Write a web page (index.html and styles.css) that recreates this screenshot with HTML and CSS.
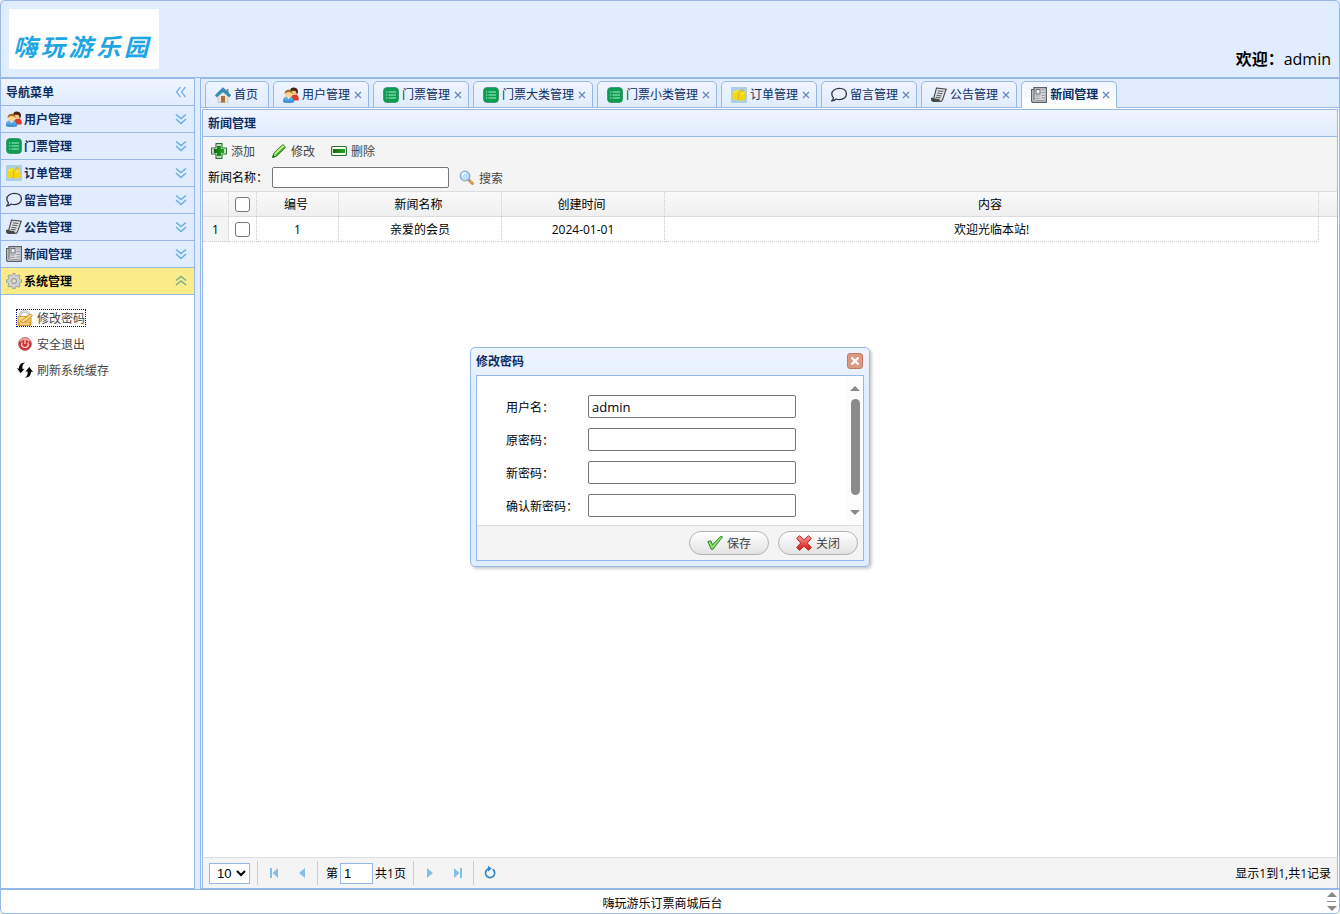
FILE: index.html
```html
<!DOCTYPE html>
<html lang="zh-CN">
<head>
<meta charset="utf-8">
<title>嗨玩游乐订票商城后台</title>
<link rel="stylesheet" href="styles.css">
</head>
<body>
<svg class="sprite" aria-hidden="true">
  <defs>
    <linearGradient id="g-gold" x1="0" y1="0" x2="0" y2="1"><stop offset="0" stop-color="#fbe08a"/><stop offset="1" stop-color="#e6a021"/></linearGradient>
    <linearGradient id="g-red" x1="0" y1="0" x2="0" y2="1"><stop offset="0" stop-color="#f6a3a0"/><stop offset="0.45" stop-color="#e85a55"/><stop offset="1" stop-color="#d01818"/></linearGradient>
    <linearGradient id="g-blue" x1="0" y1="0" x2="0" y2="1"><stop offset="0" stop-color="#7cc4f2"/><stop offset="1" stop-color="#2f86d2"/></linearGradient>
    <linearGradient id="g-green" x1="0" y1="0" x2="1" y2="0"><stop offset="0" stop-color="#0c6b0c"/><stop offset="1" stop-color="#2aa52a"/></linearGradient>
  </defs>
  <symbol id="i-home" viewBox="0 0 16 16">
    <path d="M3 8v7.500h10V8L8 3z" fill="#e9e4dc" stroke="#b9b2a6" stroke-width=".6"/>
    <path d="M6 9h4v6.500H6z" fill="#b0703a"/>
    <path d="M11.500 2h2v4h-2z" fill="#7b8d99"/>
    <path d="M8 .600L.200 8.300l1.500 1.700L8 4.700l6.300 5.300 1.500-1.700z" fill="#2f8fb5" stroke="#1e6c8c" stroke-width=".5"/>
  </symbol>
  <symbol id="i-users" viewBox="0 0 16 16">
    <path d="M8 13c0-4 1-5.500 4-5.500s3.800 2 3.800 5.500c-1 .800-6 .800-7.800 0z" fill="#e23a20"/>
    <circle cx="11" cy="5" r="3" fill="#f6c38b"/>
    <path d="M7 4.500C7 1.500 8.600.3 11 .4c2.800.1 4.200 2 4 4.600-.2 1.500-.8 2.200-1.500 2.200.2-2-.5-3.200-2.200-3.400-1.500-.2-2.500.5-4.300.7z" fill="#4b2412"/>
    <path d="M.3 15c0-4 1.500-5.500 5.100-5.500s5.400 1.500 5.400 5.500c-1.500.9-8.600.9-10.500 0z" fill="url(#g-blue)" stroke="#2a78bd" stroke-width=".5"/>
    <path d="M4 9.800l1.700 2.200L7.300 9.800z" fill="#fff"/>
    <circle cx="5.500" cy="7.200" r="3.200" fill="#ffd28c"/>
    <path d="M1.600 7.300C1.500 4.300 3 2.800 5.600 2.800s4.100 1.500 3.800 4.300C8.700 6 7.500 5.100 6 5.100s-3.200.9-4.400 2.200z" fill="#a8691c"/>
  </symbol>
  <symbol id="i-ticket" viewBox="0 0 16 16">
    <rect x=".5" y=".5" width="15" height="15" rx="3.500" fill="#0b9d52" stroke="#30875c" stroke-width=".7"/>
    <path d="M5.500 5H13M5.500 8H13M5.500 11H13" stroke="#a9efc6"/>
    <path d="M3 5h1.300M3 8h1.300M3 11h1.300" stroke="#a9efc6"/>
  </symbol>
  <symbol id="i-order" viewBox="0 0 16 16">
    <rect width="16" height="16" rx="1" fill="#accfe8"/>
    <path d="M1.500 5l5-2.500L8.500 4v8.500L3.500 13l-2-1z" fill="#f3d813"/>
    <path d="M7.500 5.500L13.500 3.500l1.500 8.500-5.500 2-2.500-1z" fill="#f5d50c"/>
    <path d="M8 5.500l-1 7M9.500 5l.5-2 2-.5.500 1.500" fill="none" stroke="#d9a90a" stroke-width=".8"/>
    <path d="M3 5.500l3-1.200M9.500 7l3.500-1" stroke="#fff17a"/>
  </symbol>
  <symbol id="i-msg" viewBox="0 0 16 16">
    <path d="M8.500 1.300c4 0 6.900 2.300 6.900 5.600s-3 5.700-6.900 5.700c-1.200 0-2.300-.2-3.300-.6C4 13.300 2.500 13.800.7 13.800c1.200-.8 1.700-1.800 1.700-3C1.300 9.800.8 8.400.8 7c0-3.300 3.400-5.700 7.700-5.700z" fill="none" stroke="#2f343f" stroke-width="1.300"/>
  </symbol>
  <symbol id="i-notice" viewBox="0 0 16 16">
    <path d="M5.500 1l9.700 1.300c-1.500 3-2.500 8.500-4.500 12L1 13.800l-.5-2.300 2.300-.5z" fill="#e2e2e2" stroke="#44464a" stroke-width="1.100"/>
    <path d="M.4 10.800l8 1.500c.2 1.500 1 2.200 2 2.400L2.500 15C1 14.600 0 12.600.4 10.800z" fill="#44464a"/>
    <path d="M7 3.700l5.300.8M6.300 6l5.200.8M5.500 8.300l5 .7M4.800 10.300l4.700.6" stroke="#55585c" stroke-width="1.100"/>
  </symbol>
  <symbol id="i-news" viewBox="0 0 16 16">
    <path d="M3 .600h12.400v14.800h-13c-1.200 0-1.800-.6-1.800-1.600V2.500H3z" fill="#d2d4d7" stroke="#5c5f64" stroke-width="1.200"/>
    <path d="M3 2.500v11" stroke="#5c5f64"/>
    <rect x="5" y="2.500" width="4" height="4.500" fill="#eee" stroke="#6d7076"/>
    <path d="M10.500 3h3.500M10.500 5.500h3.500M4.500 9h4M10.500 8.500h3.500M4.500 11.500h4M10.500 11h3.500M4.500 13.500h9.500" stroke="#9b9da2" stroke-width="1.200"/>
  </symbol>
  <symbol id="i-gear" viewBox="0 0 16 16">
    <path d="M8 0v16M0 8h16M2.300 2.300l11.400 11.400M13.700 2.300L2.300 13.700" stroke="#96989b" stroke-width="3"/>
    <circle cx="8" cy="8" r="4.300" fill="none" stroke="#96989b" stroke-width="4.600"/>
    <path d="M8 .800V4M8 12v3.200M.800 8H4M12 8h3.200M2.900 2.900L5 5M11 11l2.100 2.100M13.100 2.900L11 5M5 11l-2.100 2.100" stroke="#cfd1d3" stroke-width="1.600"/>
    <circle cx="8" cy="8" r="4.400" fill="none" stroke="#cfd1d3" stroke-width="3"/>
    <circle cx="8" cy="8" r="2.300" fill="#e9e3c0" stroke="#96989b" stroke-width=".8"/>
  </symbol>
  <symbol id="i-lock" viewBox="0 0 16 16">
    <path d="M3 7.500V5.500c0-5.500 9-5.500 9 0v2" fill="none" stroke="#9da0a3" stroke-width="2.400"/>
    <path d="M3 7.500V5.500c0-5.500 9-5.500 9 0v2" fill="none" stroke="#e4e5e6" stroke-width="1.200"/>
    <rect x="1" y="6.500" width="13" height="9" rx="1" fill="url(#g-gold)" stroke="#bd8120" stroke-width=".8"/>
    <path d="M5 12.500l1-3 7-5.500 2.500 1.500-7 6z" fill="#fbd878" stroke="#b76f13" stroke-width=".7"/>
    <path d="M5 12.500l1-2.500 1.700 1.700z" fill="#fff4d5"/>
    <path d="M3 14h9" stroke="#fff3c0"/>
  </symbol>
  <symbol id="i-power" viewBox="0 0 16 16">
    <circle cx="8" cy="8" r="6.400" fill="#cf3434" stroke="#b25553" stroke-width=".8"/>
    <path d="M3.500 5.500C5 2 11 2 12.500 5.500" fill="none" stroke="#f2aaa6" stroke-width="1.600"/>
    <path d="M5.200 6.500c-1.700 3 .6 5 2.800 5s4.500-2 2.800-5M8 4v4" fill="none" stroke="#fbe3e2" stroke-width="1.200"/>
  </symbol>
  <symbol id="i-refresh" viewBox="0 0 16 16">
    <path d="M8 .500C4 .800 1.800 3 2 6.500L0 6.300l3.700 5L7.500 6.800l-2 .100C5 4.500 5.800 2 8 .500z" fill="#080808"/>
    <path d="M8 15.800c4-.300 6.200-2.500 6-6l2 .200-3.700-5L8.500 9.500l2-.100c.500 2.400-.300 4.900-2.500 6.400z" fill="#080808"/>
  </symbol>
  <symbol id="i-add" viewBox="0 0 16 16">
    <path d="M5 .600h6V5h4.400v6H11v4.400H5V11H.600V5H5z" fill="#f3fbef" stroke="#26702b" stroke-width="1.100" stroke-linejoin="round"/>
    <path d="M6 2.700h4V6h3.300v4H10v3.300H6V10H2.700V6H6z" fill="url(#g-green)"/>
  </symbol>
  <symbol id="i-edit" viewBox="0 0 16 16">
    <path d="M1.500 14.500l1.200-4L11 2.200c1.200-1.200 4 1.500 2.800 2.800L5.500 13.300z" fill="#8fda52" stroke="#2c7f22"/>
    <path d="M4 11l8.500-8" stroke="#d2f7aa" stroke-width="1.200"/>
    <path d="M5 12.500l8.500-8" stroke="#3d9c28" stroke-width="1.200"/>
    <path d="M1.500 14.500l.8-2.500 1.700 1.700z" fill="#164a12"/>
  </symbol>
  <symbol id="i-remove" viewBox="0 0 16 16">
    <rect x=".6" y="3.500" width="14.800" height="9" rx="1" fill="#f3fbef" stroke="#26702b" stroke-width="1.100"/>
    <rect x="2" y="6" width="12" height="4" fill="url(#g-green)"/>
  </symbol>
  <symbol id="i-search" viewBox="0 0 16 16">
    <path d="M10 10l3.500 3.500" stroke="#c87d2b" stroke-width="2.800" stroke-linecap="round"/>
    <path d="M10.500 10l3.200 3.500" stroke="#f4bd72" stroke-width="1.100"/>
    <circle cx="6" cy="6" r="4.800" fill="#bfe0fb" stroke="#8fabd6" stroke-width="1.300"/>
    <path d="M3 5.500C3.500 3.500 5 2.800 7 3" fill="none" stroke="#fff" stroke-width="1.500"/>
  </symbol>
  <symbol id="i-ok" viewBox="0 0 16 16">
    <path d="M.8 6.500l3-.7 1.700 4L13.500 1.500l2 .300L5.700 14.500l-1.500-.3z" fill="#7bd251" stroke="#2c8a2a" stroke-linejoin="round"/>
    <path d="M2.300 7l2.900 5.500L14 2.300" fill="none" stroke="#b9f08e" stroke-width=".8"/>
  </symbol>
  <symbol id="i-no" viewBox="0 0 16 16">
    <path d="M3.500.700L8 4.700 12.500.700l2.800 2.800L11.300 8l4 4.500-2.800 2.800L8 11.300l-4.500 4-2.800-2.800L4.700 8 .700 3.500z" fill="url(#g-red)" stroke="#bd2625" stroke-linejoin="round"/>
  </symbol>
  <symbol id="i-down" viewBox="0 0 12 12">
    <path d="M1 1.500l5 4 5-4M1 6l5 4.500L11 6" fill="none" stroke="#68aee2" stroke-width="1.500"/>
  </symbol>
  <symbol id="i-up" viewBox="0 0 12 12">
    <path d="M1 5.500L6 1.500l5 4M1 10l5-4 5 4" fill="none" stroke="#79ad8f" stroke-width="1.500"/>
  </symbol>
  <symbol id="i-left" viewBox="0 0 12 12">
    <path d="M5.500 1l-4 5 4 5M10.500 1l-4 5 4 5" fill="none" stroke="#78b1e4" stroke-width="1.300"/>
  </symbol>
  <symbol id="i-x" viewBox="0 0 8 8"><path d="M1 1l6 6M7 1L1 7" stroke="#6185bd" stroke-width="1.200"/></symbol>
  <symbol id="p-first" viewBox="0 0 16 16"><path d="M4 3h2v10H4zM12 3v10L6.500 8z" fill="#84bfe8"/></symbol>
  <symbol id="p-prev" viewBox="0 0 16 16"><path d="M11 3v10L5 8z" fill="#84bfe8"/></symbol>
  <symbol id="p-next" viewBox="0 0 16 16"><path d="M5 3v10l6-5z" fill="#84bfe8"/></symbol>
  <symbol id="p-last" viewBox="0 0 16 16"><path d="M10 3h2v10h-2zM4 3v10l5.500-5z" fill="#84bfe8"/></symbol>
  <symbol id="p-load" viewBox="0 0 16 16">
    <path d="M10.700 4.200a4.600 4.600 0 1 1-4-.6" fill="none" stroke="#3588c6" stroke-width="1.700"/>
    <path d="M6 .800L9.800 3.600 6 6.400z" fill="#3588c6"/>
  </symbol>
  <symbol id="s-up" viewBox="0 0 10 5"><path d="M0 5L5 0l5 5z" fill="#888"/></symbol>
  <symbol id="s-down" viewBox="0 0 10 5"><path d="M0 0l5 5 5-5z" fill="#888"/></symbol>
</svg>

<div class="app">
  <header class="banner">
    <div class="logo" aria-label="嗨玩游乐园"><span>嗨</span><span>玩</span><span>游</span><span>乐</span><span>园</span></div>
    <p class="welcome"><strong>欢迎：</strong>admin</p>
  </header>

  <div class="middle">
    <nav class="west">
      <h2 class="west-title"><span>导航菜单</span><button class="bare" aria-label="收起"><svg class="chev"><use href="#i-left"/></svg></button></h2>
      <button class="acc"><svg class="icon"><use href="#i-users"/></svg><span>用户管理</span><svg class="chev"><use href="#i-down"/></svg></button>
      <button class="acc"><svg class="icon"><use href="#i-ticket"/></svg><span>门票管理</span><svg class="chev"><use href="#i-down"/></svg></button>
      <button class="acc"><svg class="icon"><use href="#i-order"/></svg><span>订单管理</span><svg class="chev"><use href="#i-down"/></svg></button>
      <button class="acc"><svg class="icon"><use href="#i-msg"/></svg><span>留言管理</span><svg class="chev"><use href="#i-down"/></svg></button>
      <button class="acc"><svg class="icon"><use href="#i-notice"/></svg><span>公告管理</span><svg class="chev"><use href="#i-down"/></svg></button>
      <button class="acc"><svg class="icon"><use href="#i-news"/></svg><span>新闻管理</span><svg class="chev"><use href="#i-down"/></svg></button>
      <button class="acc acc-open"><svg class="icon"><use href="#i-gear"/></svg><span>系统管理</span><svg class="chev"><use href="#i-up"/></svg></button>
      <div class="links">
        <a class="link link-focus" href="#"><svg class="icon"><use href="#i-lock"/></svg><span>修改密码</span></a>
        <a class="link" href="#"><svg class="icon"><use href="#i-power"/></svg><span>安全退出</span></a>
        <a class="link" href="#"><svg class="icon"><use href="#i-refresh"/></svg><span>刷新系统缓存</span></a>
      </div>
    </nav>

    <main class="center">
      <div class="tabs">
        <div class="tab"><a href="#"><svg class="icon"><use href="#i-home"/></svg>首页</a></div>
        <div class="tab"><a href="#"><svg class="icon"><use href="#i-users"/></svg>用户管理</a><button class="bare" aria-label="关闭"><svg class="x"><use href="#i-x"/></svg></button></div>
        <div class="tab"><a href="#"><svg class="icon"><use href="#i-ticket"/></svg>门票管理</a><button class="bare" aria-label="关闭"><svg class="x"><use href="#i-x"/></svg></button></div>
        <div class="tab"><a href="#"><svg class="icon"><use href="#i-ticket"/></svg>门票大类管理</a><button class="bare" aria-label="关闭"><svg class="x"><use href="#i-x"/></svg></button></div>
        <div class="tab"><a href="#"><svg class="icon"><use href="#i-ticket"/></svg>门票小类管理</a><button class="bare" aria-label="关闭"><svg class="x"><use href="#i-x"/></svg></button></div>
        <div class="tab"><a href="#"><svg class="icon"><use href="#i-order"/></svg>订单管理</a><button class="bare" aria-label="关闭"><svg class="x"><use href="#i-x"/></svg></button></div>
        <div class="tab"><a href="#"><svg class="icon"><use href="#i-msg"/></svg>留言管理</a><button class="bare" aria-label="关闭"><svg class="x"><use href="#i-x"/></svg></button></div>
        <div class="tab"><a href="#"><svg class="icon"><use href="#i-notice"/></svg>公告管理</a><button class="bare" aria-label="关闭"><svg class="x"><use href="#i-x"/></svg></button></div>
        <div class="tab tab-on"><a href="#"><svg class="icon"><use href="#i-news"/></svg>新闻管理</a><button class="bare" aria-label="关闭"><svg class="x"><use href="#i-x"/></svg></button></div>
      </div>

      <section class="panel">
        <h2 class="panel-title">新闻管理</h2>
        <div class="toolbar">
          <div class="tools">
            <button class="tool"><svg class="icon"><use href="#i-add"/></svg>添加</button>
            <button class="tool"><svg class="icon"><use href="#i-edit"/></svg>修改</button>
            <button class="tool"><svg class="icon"><use href="#i-remove"/></svg>删除</button>
          </div>
          <div class="filter">
            <label for="news-name">新闻名称：</label>
            <input class="field" id="news-name" type="text">
            <button class="tool"><svg class="icon"><use href="#i-search"/></svg>搜索</button>
          </div>
        </div>
        <div class="grid">
          <table class="data">
            <colgroup><col class="c-num"><col class="c-check"><col class="c-id"><col class="c-mid"><col class="c-mid"><col><col class="c-end"></colgroup>
            <thead>
              <tr><th></th><th><input class="tick" type="checkbox" aria-label="全选"></th><th>编号</th><th>新闻名称</th><th>创建时间</th><th>内容</th><th></th></tr>
            </thead>
            <tbody>
              <tr><td class="rownum">1</td><td><input class="tick" type="checkbox" aria-label="选择第1行"></td><td>1</td><td>亲爱的会员</td><td>2024-01-01</td><td>欢迎光临本站!</td><td class="blank"></td></tr>
            </tbody>
          </table>
        </div>
        <div class="pager">
          <select class="size" aria-label="每页条数"><option>10</option></select>
          <i class="sep"></i>
          <button class="page-btn" aria-label="首页"><svg class="icon"><use href="#p-first"/></svg></button>
          <button class="page-btn" aria-label="上一页"><svg class="icon"><use href="#p-prev"/></svg></button>
          <i class="sep"></i>
          <label class="page-label" for="page-no">第</label>
          <input class="page-no" id="page-no" type="text" value="1">
          <span class="page-total">共1页</span>
          <i class="sep"></i>
          <button class="page-btn" aria-label="下一页"><svg class="icon"><use href="#p-next"/></svg></button>
          <button class="page-btn" aria-label="末页"><svg class="icon"><use href="#p-last"/></svg></button>
          <i class="sep"></i>
          <button class="page-btn" aria-label="刷新"><svg class="icon"><use href="#p-load"/></svg></button>
          <span class="page-info">显示1到1,共1记录</span>
        </div>
      </section>
    </main>
  </div>

  <footer class="foot">
    <p class="foot-text">嗨玩游乐订票商城后台</p>
    <div class="foot-scroll"><svg class="arrow"><use href="#s-up"/></svg><i class="rule"></i><svg class="arrow"><use href="#s-down"/></svg></div>
  </footer>
</div>

<section class="dialog" role="dialog" aria-labelledby="dlg-title">
  <div class="dialog-head">
    <h2 class="dialog-title" id="dlg-title">修改密码</h2>
    <button class="dialog-close" aria-label="关闭"><svg class="close-x" viewBox="0 0 10 10"><path d="M1.500 1.500l7 7M8.500 1.500l-7 7" stroke="#fff" stroke-width="2.400"/></svg></button>
  </div>
  <div class="dialog-box">
    <div class="dialog-body">
      <form class="form">
        <label for="f-user">用户名：</label><input class="field" id="f-user" type="text" value="admin">
        <label for="f-old">原密码：</label><input class="field" id="f-old" type="password">
        <label for="f-new">新密码：</label><input class="field" id="f-new" type="password">
        <label for="f-again">确认新密码：</label><input class="field" id="f-again" type="password">
      </form>
      <div class="scroll"><svg class="arrow"><use href="#s-up"/></svg><i class="thumb"></i><svg class="arrow"><use href="#s-down"/></svg></div>
    </div>
    <div class="dialog-foot">
      <button class="pill"><svg class="icon"><use href="#i-ok"/></svg>保存</button>
      <button class="pill"><svg class="icon"><use href="#i-no"/></svg>关闭</button>
    </div>
  </div>
</section>
</body>
</html>
```
FILE: styles.css
```css
* { box-sizing: border-box; }

body {
  margin: 0;
  background: #eee;
  color: #000;
  font: 12px/16px "Open Sans", "Noto Sans CJK SC", sans-serif;
}

h2, p { margin: 0; font-size: 12px; }

button, input, select { font-family: inherit; font-size: 12px; }

.sprite { position: absolute; width: 0; height: 0; }
.icon { flex: none; display: block; width: 16px; height: 16px; }
.chev { flex: none; display: block; width: 12px; height: 12px; }
.x { display: block; width: 8px; height: 8px; }
.arrow { display: block; width: 10px; height: 5px; }
.bare { display: flex; padding: 0; border: 0; background: none; }

.app { display: flex; flex-direction: column; height: 100vh; }

/* Banner */
.banner {
  display: flex;
  justify-content: space-between;
  align-items: flex-end;
  padding: 8px;
  border: 1px solid #95b8e7;
  border-radius: 5px 5px 0 0;
  background: #e0ecff;
}
.logo {
  display: flex;
  justify-content: space-between;
  align-items: flex-end;
  width: 150px;
  height: 60px;
  padding: 0 11px 4px 4px;
  background: #fff;
  color: #1ea5e2;
  font-size: 24px;
  font-style: italic;
  font-weight: bold;
  line-height: 36px;
}
.welcome { font-size: 16px; line-height: 20px; }

/* Middle */
.middle { flex: 1; display: flex; gap: 5px; min-height: 0; background: #e0ecff; }

.west {
  flex: none;
  width: 195px;
  border: 1px solid #95b8e7;
  background: #fff;
}
.west-title, .acc {
  display: flex;
  align-items: center;
  width: 100%;
  height: 27px;
  padding: 0 7px 0 5px;
  border: 0;
  border-bottom: 1px solid #95b8e7;
  color: #0e2d5f;
  font-weight: bold;
}
.west-title { justify-content: space-between; background: linear-gradient(#eff5ff, #e0ecff); }
.west-title span { padding-top: 2px; }
.acc { gap: 2px; background: #e0ecff; text-align: left; }
.acc span { flex: 1; }
.acc-open { background: #fbec88; color: #000; }

.links { display: flex; flex-direction: column; align-items: flex-start; gap: 8px; padding: 14px 15px; }
.link {
  display: flex;
  align-items: center;
  gap: 4px;
  height: 18px;
  padding: 0 1px;
  color: #444;
  text-decoration: none;
}
.link span { padding-top: 2px; }
.link-focus { outline: 1px dotted #00008b; outline-offset: -1px; }

/* Tabs */
.center {
  flex: 1;
  display: flex;
  flex-direction: column;
  min-width: 0;
  border: 1px solid #95b8e7;
  background: #fff;
}
.tabs {
  display: flex;
  gap: 4px;
  padding: 2px 4px 0;
  border-bottom: 1px solid #95b8e7;
  background: #e0ecff;
}
.tab {
  display: flex;
  align-items: center;
  gap: 4px;
  height: 27px;
  margin-bottom: -1px;
  padding: 0 6px 0 9px;
  border: 1px solid #95b8e7;
  border-radius: 5px 5px 0 0;
  background: linear-gradient(#eff5ff, #e0ecff);
}
.tab:first-child { padding-right: 10px; }
.tab a { display: flex; align-items: center; gap: 3px; color: #0e2d5f; text-decoration: none; }
.tab-on { border-bottom-color: #fff; background: linear-gradient(#eff5ff, #fff); }
.tab-on a { font-weight: bold; }

/* Grid panel */
.panel {
  flex: 1;
  display: flex;
  flex-direction: column;
  margin: 1px 1px 0;
  border: 1px solid #95b8e7;
  border-bottom: 0;
}
.panel-title {
  padding: 6px 5px 4px;
  border-bottom: 1px solid #95b8e7;
  background: linear-gradient(#eff5ff, #e0ecff);
  color: #0e2d5f;
}
.toolbar {
  display: flex;
  flex-direction: column;
  gap: 5px;
  padding: 3px 5px;
  border-bottom: 1px solid #ddd;
  background: #f4f4f4;
}
.tools { display: flex; gap: 16px; height: 22px; padding-left: 3px; }
.tool {
  display: flex;
  align-items: center;
  gap: 4px;
  padding: 0;
  border: 0;
  background: none;
  color: #444;
}
.filter { display: flex; align-items: center; height: 21px; }
.filter label { width: 64px; white-space: nowrap; }
.filter .field { width: 177px; margin-right: 10px; }
.field {
  height: 21px;
  padding: 1px 3px;
  border: 1px solid #767676;
  border-radius: 2px;
  background: #fff;
  font-size: 13px;
}

.grid { flex: 1; }
.data { width: 100%; border-collapse: separate; border-spacing: 0; table-layout: fixed; }
.c-num { width: 26px; }
.c-check { width: 28px; }
.c-id { width: 82px; }
.c-mid { width: 163px; }
.c-end { width: 18px; }
.data th, .data td {
  height: 25px;
  padding: 2px 0 0;
  border-right: 1px dotted #ccc;
  font-weight: normal;
  text-align: center;
}
.data th { padding-right: 3px; border-bottom: 1px solid #ddd; background: linear-gradient(#f9f9f9, #efefef); }
.data td { border-bottom: 1px dotted #ccc; }
.data th:nth-child(2), .data td:nth-child(2) { padding: 0; }
.data th:last-child, .data .blank { border-right: 0; }
.data .blank { border-bottom: 0; }
.data .rownum { background: #f4f4f4; }
.tick {
  appearance: none;
  display: block;
  width: 15px;
  height: 15px;
  margin: 0 auto;
  border: 1px solid #767676;
  border-radius: 3px;
  background: #fff;
}
.tick:checked { background: #0075ff; }

/* Pager */
.pager {
  display: flex;
  align-items: center;
  height: 31px;
  padding: 0 6px;
  border-top: 1px solid #ddd;
  background: #f4f4f4;
}
.size, .page-no {
  height: 21px;
  border: 1px solid #95b8e7;
  background: #fff;
  font-family: "Liberation Sans", sans-serif;
  font-size: 13px;
}
.size { width: 41px; padding: 0 0 0 3px; }
.page-no { width: 33px; padding: 0 3px; }
.sep { width: 1px; height: 24px; margin: 0 2px 0 1px; background: #ccc; }
.size + .sep { margin-left: 7px; }
.page-btn { display: flex; justify-content: center; width: 28px; padding: 0; border: 0; background: none; }
.page-label { padding: 2px 2px 0 6px; }
.page-total { padding: 2px 6px 0 2px; }
.page-info { margin-left: auto; padding-top: 2px; }

/* Footer */
.foot {
  display: flex;
  align-items: center;
  height: 25px;
  border: 1px solid #95b8e7;
  border-radius: 0 0 5px 5px;
  background: #fff;
}
.foot-text { flex: 1; padding-top: 5px; text-align: center; }
.foot-scroll { display: flex; flex-direction: column; align-items: center; gap: 4px; width: 15px; }
.rule { width: 9px; height: 1px; background: #888; }

/* Dialog */
.dialog {
  position: absolute;
  top: calc(50% - 110px);
  left: calc(50% - 200px);
  width: 400px;
  padding: 5px;
  border: 1px solid #95b8e7;
  border-radius: 5px;
  background: linear-gradient(#eff5ff, #e0ecff 20%);
  box-shadow: 2px 2px 3px #ccc;
}
.dialog-head { display: flex; justify-content: space-between; height: 22px; padding-right: 1px; }
.dialog-title { color: #0e2d5f; line-height: 18px; }
.dialog-close {
  display: flex;
  align-items: center;
  justify-content: center;
  width: 16px;
  height: 16px;
  padding: 0;
  border: 1px solid #bd7b68;
  border-radius: 3px;
  background: #dc9880;
}
.close-x { width: 10px; height: 10px; }
.dialog-box { border: 1px solid #95b8e7; background: #fff; }
.dialog-body { display: flex; justify-content: space-between; height: 149px; }
.form {
  display: grid;
  grid-template-columns: 82px 208px;
  grid-auto-rows: 23px;
  row-gap: 10px;
  align-items: center;
  padding: 19px 0 0 29px;
}
.form label { padding-top: 2px; }
.form .field { width: 208px; height: 23px; }
.scroll {
  display: flex;
  flex-direction: column;
  align-items: center;
  width: 16px;
  padding: 10px 0;
  background: #fcfcfc;
}
.thumb { flex: 1; width: 9px; margin: 8px 0 15px; border-radius: 5px; background: #8b8b8b; }
.dialog-foot {
  display: flex;
  justify-content: flex-end;
  gap: 9px;
  padding: 5px;
  border-top: 1px solid #ddd;
  background: #f4f4f4;
}
.pill {
  display: flex;
  align-items: center;
  justify-content: center;
  gap: 4px;
  width: 80px;
  height: 24px;
  padding: 0;
  border: 1px solid #b2b2b2;
  border-radius: 12px;
  background: linear-gradient(#fff, #e2e2e2);
  color: #444;
}
```
